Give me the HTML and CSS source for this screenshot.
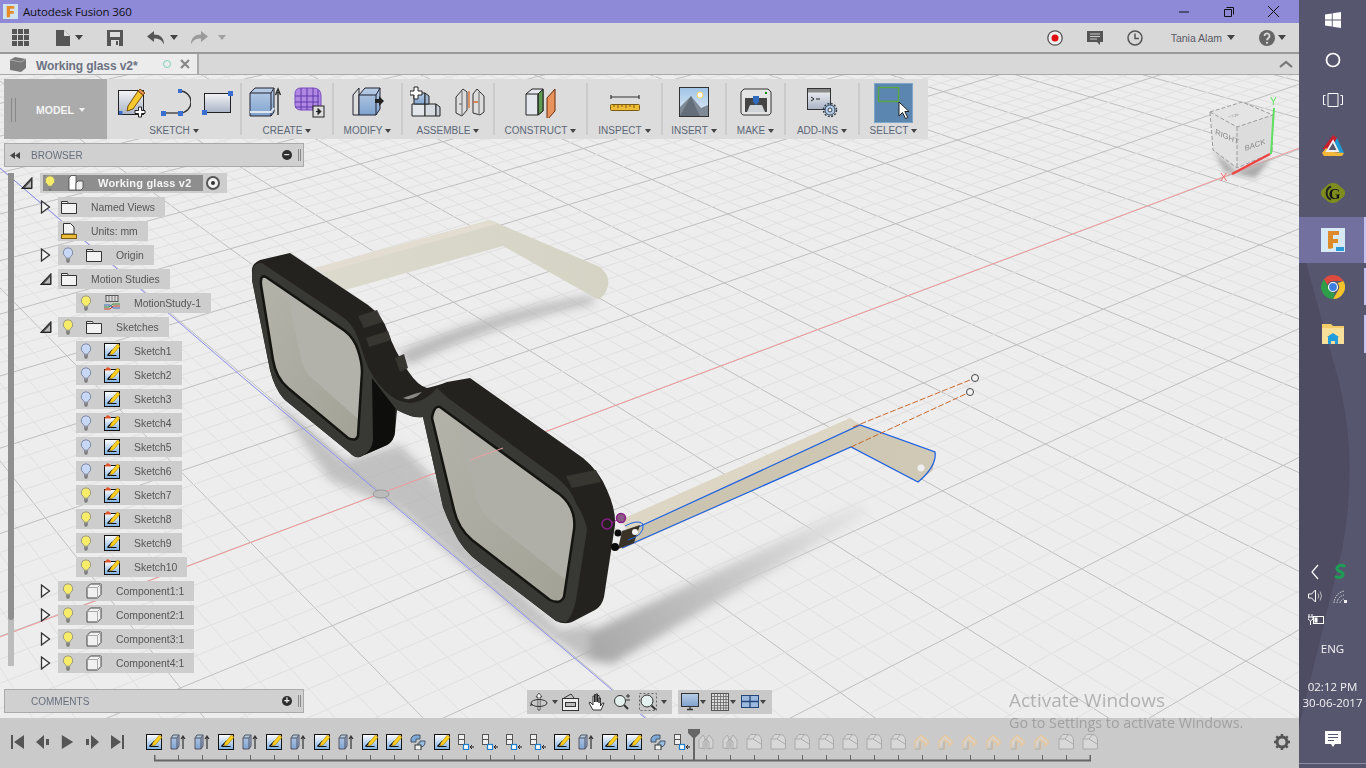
FILE: index.html
```html
<!DOCTYPE html>
<html lang="en">
<head>
<meta charset="utf-8">
<title>Autodesk Fusion 360</title>
<link rel="stylesheet" href="styles.css">
</head>
<body>
<svg class="defs" width="0" height="0" aria-hidden="true">
  <defs>
    <linearGradient id="gSk" x1="0" y1="0" x2="0" y2="1"><stop offset="0" stop-color="#fff"/><stop offset="1" stop-color="#7fb0e0"/></linearGradient>
    <linearGradient id="gPanel" x1="0" y1="0" x2="0" y2="1"><stop offset="0" stop-color="#f4f4f6"/><stop offset="1" stop-color="#a9b3c6"/></linearGradient>
    <linearGradient id="gBlue" x1="0" y1="0" x2="0" y2="1"><stop offset="0" stop-color="#b9cde6"/><stop offset="1" stop-color="#7fa3cf"/></linearGradient>
    <linearGradient id="gSky" x1="0" y1="0" x2="0" y2="1"><stop offset="0" stop-color="#9fc4e6"/><stop offset="1" stop-color="#e4eef6"/></linearGradient>
    <linearGradient id="gTemple" x1="0" y1="0" x2="1" y2="0"><stop offset="0" stop-color="#dcdacd"/><stop offset="1" stop-color="#d4d3c4"/></linearGradient>
    <linearGradient id="gNear" x1="0" y1="0" x2="1" y2="0"><stop offset="0" stop-color="#c9c2ae"/><stop offset="1" stop-color="#d0c9b6"/></linearGradient>
    <linearGradient id="gLens" x1="0" y1="0" x2="1" y2="1"><stop offset="0" stop-color="#b4b3aa"/><stop offset="1" stop-color="#a3a297"/></linearGradient>
    <linearGradient id="gFade" gradientUnits="userSpaceOnUse" x1="590" y1="650" x2="870" y2="505"><stop offset="0" stop-color="#a8a8a8"/><stop offset=".45" stop-color="#c4c4c4"/><stop offset="1" stop-color="#e6e6e6"/></linearGradient>
    <filter id="blur6" x="-30%" y="-30%" width="160%" height="160%"><feGaussianBlur stdDeviation="5"/></filter>
    <filter id="blur3" x="-30%" y="-30%" width="160%" height="160%"><feGaussianBlur stdDeviation="2.5"/></filter>

    <symbol id="bulbY" viewBox="0 0 12 16"><path d="M6 .8a4.8 4.8 0 0 0-2.6 8.8c.5.4.6 1 .6 1.6h4c0-.6.1-1.2.6-1.6A4.8 4.8 0 0 0 6 .8z" fill="#f7ec6a" stroke="#9a9a80"/><rect x="4" y="11.5" width="4" height="3" fill="#888"/><rect x="4.8" y="14.2" width="2.4" height="1.3" fill="#666"/></symbol>
    <symbol id="bulbB" viewBox="0 0 12 16"><path d="M6 .8a4.8 4.8 0 0 0-2.6 8.8c.5.4.6 1 .6 1.6h4c0-.6.1-1.2.6-1.6A4.8 4.8 0 0 0 6 .8z" fill="#c8d8f4" stroke="#7e8aa4"/><rect x="4" y="11.5" width="4" height="3" fill="#888"/><rect x="4.8" y="14.2" width="2.4" height="1.3" fill="#666"/></symbol>
    <symbol id="folder" viewBox="0 0 16 14"><path d="M.5 13.5V1.5h6l1 2h8v10z" fill="#f2f2f2" stroke="#333"/><path d="M.5 3.5h7" stroke="#333" fill="none"/></symbol>
    <symbol id="doc" viewBox="0 0 16 16"><path d="M2.5 11V.5h7l3.500 3.500v7z" fill="#f2f2f2" stroke="#333"/><rect x=".5" y="11.5" width="15" height="4" fill="#edbb3a" stroke="#7a5a10"/></symbol>
    <symbol id="comp" viewBox="0 0 16 16"><path d="M1 4.500 4.500 1H15v10.500L11.500 15H1z" fill="#f1f1f1" stroke="#444"/><path d="M1 4.500h10.500V15M11.500 4.500 15 1" fill="none" stroke="#aaa"/></symbol>
    <symbol id="rootc" viewBox="0 0 16 16"><path d="M1 3 3 .5h5V15H1z" fill="#fff" stroke="#444" stroke-width=".8"/><path d="M8 8l2-2h5v7l-2 2H8z" fill="#eee" stroke="#444" stroke-width=".8"/></symbol>
    <symbol id="motion" viewBox="0 0 16 16"><rect x="2" y=".5" width="12" height="6" fill="#ddd" stroke="#555"/><path d="M5 .5v6M8 .5v6M11 .5v6" stroke="#777"/><path d="M0 12h5l4-3h7" stroke="#3a8f3a" fill="none"/><path d="M0 14h6l3-3h7" stroke="#d04030" fill="none"/><path d="M0 10h6l3 3h7" stroke="#4070c0" fill="none"/></symbol>
    <symbol id="sk" viewBox="0 0 16 16"><rect x=".5" y=".5" width="15" height="15" fill="url(#gSk)" stroke="#111"/><path d="M3.500 12.500h9M3.500 12.500 8.500 7" stroke="#111" stroke-width="1.200" fill="none"/><path d="M6 12l1-3.500L13.500 1 16 3.200 9.500 10.700z" fill="#ffd21e" stroke="#a8730c" stroke-width=".6"/></symbol>
    <symbol id="skw" viewBox="0 0 16 16"><rect x=".5" y="2.500" width="15" height="13" fill="url(#gSk)" stroke="#111"/><path d="M3.500 12.500h9M3.500 12.500 8.500 7" stroke="#111" stroke-width="1.200" fill="none"/><path d="M6 12l1-3.500L13.500 1 16 3.200 9.500 10.700z" fill="#ffd21e" stroke="#a8730c" stroke-width=".6"/><path d="M0 3.500h7V2L3.500 0z" fill="#e0562e"/></symbol>
    <symbol id="ex" viewBox="0 0 16 16"><path d="M1 4 3 1h6v11l-2 3H1z" fill="url(#gBlue)" stroke="#556"/><path d="M1 4h6v11M7 4l2-3" fill="none" stroke="#556"/><path d="M13 15V3M11 5l2-3 2 3" fill="none" stroke="#333" stroke-width="1.200"/></symbol>
    <symbol id="cb" viewBox="0 0 16 16"><path d="M1 7a5 5 0 0 1 5-6h4v4H6v3H1z" fill="#7fa9d6" stroke="#456"/><path d="M15 9a5 5 0 0 1-5 4H8V9h2V7h5z" fill="#9cc0e4" stroke="#456"/><rect x="5" y="11" width="6" height="5" fill="#f3f3f3" stroke="#333"/></symbol>
    <symbol id="jt" viewBox="0 0 16 16"><rect x=".5" y=".5" width="6" height="5" fill="#eee" stroke="#555"/><rect x=".5" y="5.500" width="6" height="5" fill="#eee" stroke="#555"/><rect x="5.500" y="10.500" width="5" height="5" fill="#fff" stroke="#1f7fd0" stroke-width="1.200"/><path d="M16 13h-4M14 11l-2 2 2 2" fill="none" stroke="#222"/></symbol>
    <symbol id="ga" viewBox="0 0 16 16"><path d="M1 14V6l4-5 2 3v11zM15 14V6l-4-5-2 3v11z" fill="#d4d4d4" stroke="#aaa"/><path d="M5 15V8l3-3 3 3v7" fill="none" stroke="#aaa"/></symbol>
    <symbol id="gd" viewBox="0 0 16 16"><path d="M1 5 5 .5h5a5.500 5.500 0 0 1 5.500 5.500V15H1z" fill="#d8d8d8" stroke="#aaa"/><path d="M1 5h6l8 5M7 5l3-4" fill="none" stroke="#aaa"/></symbol>
    <symbol id="go" viewBox="0 0 16 16"><path d="M1 15V7l6-6 8 7-4 4V9L7 6v9z" fill="#d8d2c8" stroke="#e8c59a" stroke-width="1.200"/><path d="M1 15h5V7" fill="#ccc" stroke="#aaa"/></symbol>
    <symbol id="twO" viewBox="0 0 12 14"><path d="M.5 12.500 11 1.500v11z" fill="#444" stroke="#222"/><path d="M4 11.500 10 5v6.500z" fill="#bbb"/></symbol>
    <symbol id="twC" viewBox="0 0 12 14"><path d="M1.500 1 9.500 7l-8 6z" fill="#f4f4f4" stroke="#333" stroke-width="1.300"/></symbol>
  </defs>
</svg>

<div class="app">
  <div class="main">
    <header class="titlebar">
      <svg class="app-logo" viewBox="0 0 16 16"><rect width="16" height="16" fill="#cfe2f0"/><path d="M4 2h8v3H7.500v2.500h4v3h-4V14H4z" fill="#e88b2a"/></svg>
      <span class="app-title">Autodesk Fusion 360</span>
      <div class="win-ctrls">
        <span class="win-btn"><svg viewBox="0 0 14 14"><path d="M2 7h10" stroke="#111"/></svg></span>
        <span class="win-btn"><svg viewBox="0 0 14 14"><path d="M4.500 2.500h7v7M2.500 4.500h7v7h-7z" fill="none" stroke="#111"/></svg></span>
        <span class="win-btn"><svg viewBox="0 0 14 14"><path d="M1 1l11 11M12 1 1 12" stroke="#111" fill="none"/></svg></span>
      </div>
    </header>

    <div class="qat">
      <svg class="q-grid" viewBox="0 0 17 17"><path d="M0 0h5v5H0zM6 0h5v5H6zM12 0h5v5h-5zM0 6h5v5H0zM6 6h5v5H6zM12 6h5v5h-5zM0 12h5v5H0zM6 12h5v5H6zM12 12h5v5h-5z" fill="#555"/></svg>
      <div class="q-cluster q-file">
        <svg class="q-ico14" viewBox="0 0 14 16"><path d="M0 0h8l6 6v10H0z" fill="#555"/><path d="M8 0v6h6" fill="#ddd"/></svg><span class="caret"></span>
      </div>
      <svg class="q-save" viewBox="0 0 16 16"><path d="M0 0h16v16H0z" fill="#555"/><rect x="3" y="2" width="10" height="5" fill="#ddd"/><rect x="4" y="10" width="8" height="6" fill="#ddd"/><rect x="9" y="11" width="2" height="4" fill="#555"/></svg>
      <div class="q-cluster q-undo">
        <svg class="q-ico17" viewBox="0 0 17 14"><path d="M7 0v3.500c6 0 10 3 10 10C15 9 12 7.500 7 7.500V11L0 5.500z" fill="#555"/></svg><span class="caret"></span>
      </div>
      <div class="q-cluster q-redo">
        <svg class="q-ico17" viewBox="0 0 17 14"><path d="M10 0v3.500c-6 0-10 3-10 10C2 9 5 7.500 10 7.500V11l7-5.500z" fill="#9a9a9a"/></svg><span class="caret caret-off"></span>
      </div>
      <div class="q-right">
        <svg class="q-ico16" viewBox="0 0 16 16"><circle cx="8" cy="8" r="7.200" fill="#eee" stroke="#555" stroke-width="1.300"/><circle cx="8" cy="8" r="3.500" fill="#e01010"/></svg>
        <svg class="q-ico16" viewBox="0 0 16 16"><path d="M0 1h16v11h-3v3l-3-3H0z" fill="#555"/><path d="M3 4h10M3 6.500h10M3 9h7" stroke="#ccc"/></svg>
        <svg class="q-ico16" viewBox="0 0 16 16"><circle cx="8" cy="8" r="7" fill="none" stroke="#555" stroke-width="1.500"/><path d="M8 3.500V8.500h4" fill="none" stroke="#555" stroke-width="1.500"/></svg>
        <span class="user">Tania Alam</span><span class="caret user-caret"></span>
        <svg class="q-ico16 q-help" viewBox="0 0 16 16"><circle cx="8" cy="8" r="8" fill="#666"/><path d="M5.500 6a2.500 2.500 0 1 1 3.800 2.100C8.500 8.700 8 9 8 10.300" fill="none" stroke="#ddd" stroke-width="1.800"/><circle cx="8" cy="12.800" r="1.100" fill="#ddd"/></svg><span class="caret help-caret"></span>
      </div>
    </div>

    <div class="tabbar">
      <div class="tab">
        <svg class="tab-cube" viewBox="0 0 16 15"><path d="M0 3 5 0l11 2v9l-5 4-11-2z" fill="#777"/><path d="M0 3l11 2 5-3" fill="none" stroke="#aaa"/></svg>
        <span class="tab-name">Working glass v2*</span>
        <span class="tab-dot"></span>
        <svg class="tab-x" viewBox="0 0 10 10"><path d="M1 1l8 8M9 1 1 9" stroke="#888" stroke-width="2.200"/></svg>
      </div>
      <svg class="tab-up" viewBox="0 0 14 8"><path d="M1 7l6-5 6 5" fill="none" stroke="#777" stroke-width="2.200"/></svg>
    </div>

    <div class="viewport">
      <svg class="scene" viewBox="0 75 1299 643" width="1299" height="643">
        <g id="grid"></g>
        <g filter="url(#blur6)" fill="#b2b2b2">
          <path d="M400 352C460 325 530 305 590 296L596 303C530 315 470 335 408 365z" opacity=".9"/>
          <path d="M270 395 345 460 400 445 450 495 480 555 560 630 590 625 600 650 600 662 585 660 520 615 400 510 330 480z" opacity=".75"/>
          <path d="M590 632 860 503 868 514 612 664 590 660z" fill="url(#gFade)"/>
        </g>
        <path d="M0 168 240 375 565 650 645 718" fill="none" stroke="#8d8df0" stroke-width="1"/>
        <path d="M0 637 382 493 1163 200 1299 148" fill="none" stroke="#f59a9a" stroke-width="1"/>
        <ellipse cx="381" cy="494" rx="8" ry="4" fill="#bbb" stroke="#999"/>

        <!-- far temple -->
        <path d="M315 268 490 220 600 267Q610 275 608 286 605 298 597 299L503 246 345 290z" fill="url(#gTemple)"/>
        <path d="M315 268 490 220 497 224 325 272z" fill="#e2ddd0"/>

        <!-- glasses body -->
        <path d="M252 272Q251 264 260 260L290 253 368 305Q383 316 388 332 394 350 408 371 418 386 427 388 440 385 447 382L470 378 583 458Q600 472 607 490 616 510 615 525L604 597Q602 606 595 610L572 622Q564 625 556 621L480 563Q462 550 453 530 447 518 443 507L423 417Q414 419 397 410L395 432Q394 441 387 445L360 457Q354 458 350 453L285 400Q275 390 270 370L252 280z" fill="#23221e"/>
        <g fill="#373631">
          <path d="M358 316 377 310 383 322 364 328z"/>
          <path d="M366 338 388 331 391 340 369 347z"/>
          <path d="M566 476 596 470 601 482 572 488z"/>
          <path d="M395 358 404 354 408 368 400 372z"/>
        </g>
        <path d="M252 274Q253 262 262 263L340 315Q352 322 358 338L366 362Q372 378 385 391 396 402 410 403 425 402 437 388L448 398 556 477Q570 487 576 503 586 520 587 530L576 600Q573 615 566 622L556 621 480 563Q462 550 453 530 447 518 443 507L423 417Q414 419 397 410L376 384 374 440Q372 452 360 457 354 458 350 453L285 400Q275 390 270 370L252 280z" fill="#383834"/>
        <path d="M372 378 395 408 395 432Q394 441 387 445L364 455Q372 450 373 440z" fill="#0e0e0c"/>
        <path d="M403 398Q412 402 422 392 416 393 403 398z" fill="#8a8983"/>
        <!-- left lens -->
        <path d="M266 277Q260 274 261 285L273 360Q276 378 288 388L348 438Q356 442 358 436L362 372Q362 362 358 350 354 338 345 331z" fill="#c3c2bb" fill-opacity=".88"/>
        <path d="M266 278 289 301 302 363Q305 372 312 378L359 420 358 436Q356 442 348 438L288 388Q276 378 273 360L261 285z" fill="url(#gLens)"/>
        <path d="M266 277Q260 274 261 285L273 360Q276 378 288 388L348 438Q356 442 358 436L362 372Q362 362 358 350 354 338 345 331z" fill="none" stroke="#141411" stroke-width="2.500"/>
        <!-- right lens -->
        <path d="M440 407Q434 405 432 418L454 510Q458 528 472 540L550 600Q560 605 564 597L574 530Q576 515 568 503 563 496 555 491z" fill="#c3c2bb" fill-opacity=".86"/>
        <path d="M440 408 458 420 476 498Q480 510 490 520L567 581 564 597Q560 605 550 600L472 540Q458 528 454 510L432 418z" fill="url(#gLens)"/>
        <path d="M440 407Q434 405 432 418L454 510Q458 528 472 540L550 600Q560 605 564 597L574 530Q576 515 568 503 563 496 555 491z" fill="none" stroke="#141411" stroke-width="2.500"/>
        <path d="M470 460 503 448" stroke="#e9a0a0" fill="none"/>

        <!-- near temple -->
        <path d="M620 520 850 418 860 425 630 534z" fill="#ddd6c4"/>
        <path d="M628 533 860 425 935 452 933 470 918 482 851 447 622 549z" fill="url(#gNear)"/>
        <path d="M632 530 860 425 935 452Q937 466 918 482L851 447 622 548" fill="none" stroke="#1c5fe0" stroke-width="1.300"/>
        <path d="M853 427 975 378M851 447 970 392" stroke="#c8682a" stroke-width="1" stroke-dasharray="6 2" fill="none"/>
        <circle cx="975" cy="378" r="3.500" fill="#f3f3f3" stroke="#444"/>
        <circle cx="970" cy="392" r="3.500" fill="#f3f3f3" stroke="#444"/>
        <circle cx="921" cy="468" r="3.500" fill="#eee"/>
        <!-- hinge -->
        <path d="M622 531 640 525 634 543 618 549z" fill="#3a3226"/>
        <path d="M628 540Q645 535 643 524 638 519 625 526" fill="none" stroke="#1c5fe0"/>
        <circle cx="618" cy="533" r="3.500" fill="#0b0b0b"/>
        <circle cx="615" cy="547" r="4" fill="#0b0b0b"/>
        <circle cx="635" cy="532" r="3" fill="#f4f4f4"/>
        <circle cx="607" cy="524" r="5" fill="none" stroke="#8a1e88" stroke-width="1.500"/>
        <circle cx="621" cy="518" r="4.500" fill="#8a5a82" stroke="#8a1e88" stroke-width="1.500"/>
        <path d="M612 523 617 520" stroke="#8a1e88"/>

        <!-- view cube -->
        <g filter="url(#blur3)"><path d="M1213 150 1237 172 1272 158 1255 178 1225 172z" fill="#aaa"/></g>
        <path d="M1210 112 1242 102 1273 115 1237 127z" fill="#e4e4e4"/>
        <path d="M1210 112 1237 127 1237 168 1213 150z" fill="#e2e2e2"/>
        <path d="M1237 127 1273 115 1272 153 1237 168z" fill="#dcdcdc"/>
        <path d="M1210 112 1242 102 1273 115 1237 127zM1210 112 1213 150 1237 168 1272 153 1273 115M1237 127V168" fill="none" stroke="#999" stroke-dasharray="4 2"/>
        <text class="vc-label" transform="matrix(1 .45 -.1 1 1215 134)">RIGHT</text>
        <text class="vc-label" transform="matrix(1 -.35 .1 1 1245 151)">BACK</text>
        <text class="vc-top" transform="matrix(.8 -.25 .8 .35 1231 118)">TOP</text>
        <path d="M1271 154 1274 108" stroke="#5fe05f" stroke-width="2"/>
        <path d="M1270 154 1232 174" stroke="#ee4444" stroke-width="2.500"/>
        <text class="vc-y" x="1270" y="105">Y</text>
        <text class="vc-x" x="1220" y="181">X</text>
      </svg>

      <div class="ribbon">
        <div class="model"><span class="grip"></span><span class="model-text">MODEL</span><span class="caret caret-w"></span></div>
        <section class="rgroup">
          <div class="ricons">
            <svg class="ri" viewBox="0 0 32 32"><rect x="3.500" y="4.500" width="25" height="24" fill="url(#gPanel)" stroke="#222"/><rect x="4" y="25" width="3.500" height="3.500" fill="#3a6fd0"/><path d="M13 20 23 5l5 4-10 14-6 2z" fill="#f5c92e" stroke="#7a4d0a"/><path d="M23 5l2-2 5 4-2 2z" fill="#e88f60" stroke="#7a4d0a"/><path d="M23.500 21h3v3.500h3.500v3h-3.500V31h-3v-3.500H20v-3h3.500z" fill="#fff" stroke="#222"/></svg>
            <svg class="ri" viewBox="0 0 32 32"><path d="M4 27h19" stroke="#333" stroke-width="1.300"/><path d="M21 5A11 11 0 0 1 21 27" fill="none" stroke="#333" stroke-width="1.300"/><path d="M2 25h5v5H2zM19 25h5v5h-5zM19 3h4v4h-4z" fill="#3a6fd0"/></svg>
            <svg class="ri ri-left" viewBox="0 0 32 32"><rect x="3.500" y="7.500" width="26" height="19" fill="url(#gPanel)" stroke="#222"/><path d="M1 24h5v5H1zM27 5h5v5h-5z" fill="#3a6fd0"/></svg>
          </div>
          <div class="rlabel">SKETCH<span class="caret"></span></div>
        </section>
        <section class="rgroup">
          <div class="ricons">
            <svg class="ri" viewBox="0 0 32 32"><path d="M1 7 6 2h19v24l-3 4H1z" fill="url(#gBlue)" stroke="#223"/><path d="M1 7h21v23M22 7l3-5" fill="none" stroke="#223"/><path d="M1 26h21l3-4" fill="none" stroke="#dfe6ee" stroke-width="2"/><path d="M29 29V6M26.500 9 29 3l2.500 6" fill="none" stroke="#222" stroke-width="1.300"/></svg>
            <svg class="ri" viewBox="0 0 32 32"><path d="M2 8q0-6 6-6h12q8 0 8 8v14H8q-6 0-6-6z" fill="#b088e4" stroke="#7a4cc0"/><path d="M2 10h24M2 16h24M2 21h22M8 2v22M14 2v22M20 2v22M25 4v20" stroke="#5e3aa8" fill="none"/><rect x="20" y="20" width="11" height="11" fill="#ddd" stroke="#222"/><path d="M23 25.500h3M25 22.500l3 3-3 3z" fill="#222" stroke="#222"/></svg>
          </div>
          <div class="rlabel">CREATE<span class="caret"></span></div>
        </section>
        <section class="rgroup">
          <div class="ricons">
            <svg class="ri" viewBox="0 0 32 32"><path d="M1 9 7 2v27H1z" fill="#ddd" stroke="#223"/><path d="M7 9l6-7h15v21l-4 6H7z" fill="url(#gBlue)" stroke="#223"/><path d="M7 9h17v20M24 9l4-7" fill="none" stroke="#223"/><path d="M23 13h4v-3l5 5-5 5v-3h-4z" fill="#222"/></svg>
          </div>
          <div class="rlabel">MODIFY<span class="caret"></span></div>
        </section>
        <section class="rgroup">
          <div class="ricons">
            <svg class="ri" viewBox="0 0 32 32"><path d="M2 18h13v12H2z" fill="#e3e7ec" stroke="#222"/><path d="M15 18h11v12H15z" fill="#d6dbe2" stroke="#222"/><path d="M26 18l4 3v9h-4z" fill="#c8cfd8" stroke="#222"/><path d="M4 7h11v11H4z" fill="url(#gBlue)" stroke="#222"/><path d="M15 7l4 3v8h-4z" fill="#9fb5d2" stroke="#222"/><path d="M4 1h4v4h4v4H8v4H4V9H0V5h4z" fill="#fff" stroke="#222"/></svg>
            <svg class="ri" viewBox="0 0 32 32"><path d="M2 27V11L9 3l4 3v18l-5 6z" fill="#ddd" stroke="#333"/><path d="M8 5v25M5 18h3" stroke="#666"/><path d="M19 27V8l4-5 7 7v16l-4 3z" fill="#ddd" stroke="#333"/><path d="M25 6v23" stroke="#666"/><path d="M15 5v17M19 16h5" stroke="#d86a2a" stroke-width="1.300"/></svg>
          </div>
          <div class="rlabel">ASSEMBLE<span class="caret"></span></div>
        </section>
        <section class="rgroup">
          <div class="ricons">
            <svg class="ri" viewBox="0 0 32 32"><path d="M1 8l6-5h11v22l-5 4H1z" fill="#e4e8ee" stroke="#222"/><path d="M13 8l5-5v22l-5 4z" fill="#5f9a52" stroke="#222"/><path d="M1 8h12v21" fill="none" stroke="#222"/><path d="M22 12l8-9v22l-8 9z" fill="#e8935c" stroke="#6a2b0a"/></svg>
          </div>
          <div class="rlabel">CONSTRUCT<span class="caret"></span></div>
        </section>
        <section class="rgroup">
          <div class="ricons">
            <svg class="ri" viewBox="0 0 32 32"><path d="M2 9v4M2 11h28M30 9v4" stroke="#333" stroke-width="1.200" fill="none"/><rect x="1.500" y="18.500" width="29" height="6" rx="1" fill="#eebc36" stroke="#7a5a10"/><path d="M5 19v2M9 19v3M13 19v2M17 19v3M21 19v2M25 19v3" stroke="#7a5a10"/></svg>
          </div>
          <div class="rlabel">INSPECT<span class="caret"></span></div>
        </section>
        <section class="rgroup">
          <div class="ricons">
            <svg class="ri" viewBox="0 0 32 32"><rect x="1.500" y="1.500" width="29" height="29" fill="url(#gSky)" stroke="#333"/><circle cx="22" cy="9" r="3" fill="#fff" stroke="#f6d860"/><path d="M2 30V21L13 10l10 12 7-3v11z" fill="#7f8a97"/><path d="M2 30 13 10l5 12 4 8z" fill="#646e7a"/></svg>
          </div>
          <div class="rlabel">INSERT<span class="caret"></span></div>
        </section>
        <section class="rgroup">
          <div class="ricons">
            <svg class="ri" viewBox="0 0 32 32"><path d="M1 6l3-3h24l3 3v21l-2 2H3l-2-2z" fill="#e4e4e4" stroke="#333"/><rect x="5" y="12" width="22" height="14" fill="#444"/><path d="M7 26l3-7h12l3 7z" fill="#cfd3d8"/><path d="M13 10h6v6l-3 3-3-3z" fill="#2f6cc0"/><rect x="25" y="6" width="2" height="2" fill="#0a8a0a"/></svg>
          </div>
          <div class="rlabel">MAKE<span class="caret"></span></div>
        </section>
        <section class="rgroup">
          <div class="ricons">
            <svg class="ri" viewBox="0 0 32 32"><rect x="1.500" y="2.500" width="23" height="21" fill="url(#gPanel)" stroke="#333"/><rect x="2" y="3" width="22" height="3.500" fill="#888"/><path d="M5 11l3 2-3 2M10 13h4" fill="none" stroke="#222"/><circle cx="24" cy="24" r="5" fill="#b7cdec" stroke="#345"/><circle cx="24" cy="24" r="6.500" fill="none" stroke="#345" stroke-width="1.500" stroke-dasharray="2 1.400"/><circle cx="24" cy="24" r="2" fill="#eee" stroke="#345"/></svg>
          </div>
          <div class="rlabel">ADD-INS<span class="caret"></span></div>
        </section>
        <section class="rgroup rgroup-sel">
          <div class="ricons">
            <svg class="select-btn" viewBox="0 0 39 40"><rect width="39" height="40" fill="#5a86b0"/><rect x=".5" y=".5" width="38" height="39" fill="none" stroke="#7ea4c8"/><rect x="4.500" y="4.500" width="20" height="14" fill="none" stroke="#5aa83a" stroke-width="1.300"/><path d="M25 19v14l3.500-3.500 3 6 2.300-1-3-6H35z" fill="#fff" stroke="#222"/></svg>
          </div>
          <div class="rlabel">SELECT<span class="caret"></span></div>
        </section>
      </div>

      <aside class="browser">
        <div class="panel-head">
          <svg class="ph-back" viewBox="0 0 10 7"><path d="M5 0v7L0 3.500zM10 0v7L5 3.500z" fill="#444"/></svg>
          <span class="ph-title">BROWSER</span>
          <span class="ph-btn">−</span><span class="ph-grip"></span>
        </div>
        <div class="tree-wrap">
          <div class="scroll-track"><div class="scroll-thumb"></div></div>
          <ul class="tree">
            <li class="row lvl0"><svg class="twist"><use href="#twO"/></svg>
              <div class="pill root">
                <div class="root-sel"><svg class="bulb"><use href="#bulbY"/></svg><svg class="ico"><use href="#rootc"/></svg><span class="label root-label">Working glass v2</span></div>
                <span class="radio"></span>
              </div></li>
            <li class="row lvl1"><svg class="twist"><use href="#twC"/></svg><div class="pill nobulb"><svg class="ico"><use href="#folder"/></svg><span class="label">Named Views</span></div></li>
            <li class="row lvl1"><span class="twist"></span><div class="pill nobulb"><svg class="ico"><use href="#doc"/></svg><span class="label">Units: mm</span></div></li>
            <li class="row lvl1"><svg class="twist"><use href="#twC"/></svg><div class="pill"><svg class="bulb"><use href="#bulbB"/></svg><svg class="ico"><use href="#folder"/></svg><span class="label">Origin</span></div></li>
            <li class="row lvl1"><svg class="twist"><use href="#twO"/></svg><div class="pill nobulb"><svg class="ico"><use href="#folder"/></svg><span class="label">Motion Studies</span></div></li>
            <li class="row lvl2"><span class="twist"></span><div class="pill"><svg class="bulb"><use href="#bulbY"/></svg><svg class="ico"><use href="#motion"/></svg><span class="label">MotionStudy-1</span></div></li>
            <li class="row lvl1"><svg class="twist"><use href="#twO"/></svg><div class="pill"><svg class="bulb"><use href="#bulbY"/></svg><svg class="ico"><use href="#folder"/></svg><span class="label">Sketches</span></div></li>
            <li class="row lvl2"><span class="twist"></span><div class="pill"><svg class="bulb"><use href="#bulbB"/></svg><svg class="ico"><use href="#sk"/></svg><span class="label">Sketch1</span></div></li>
            <li class="row lvl2"><span class="twist"></span><div class="pill"><svg class="bulb"><use href="#bulbB"/></svg><svg class="ico"><use href="#skw"/></svg><span class="label">Sketch2</span></div></li>
            <li class="row lvl2"><span class="twist"></span><div class="pill"><svg class="bulb"><use href="#bulbB"/></svg><svg class="ico"><use href="#sk"/></svg><span class="label">Sketch3</span></div></li>
            <li class="row lvl2"><span class="twist"></span><div class="pill"><svg class="bulb"><use href="#bulbB"/></svg><svg class="ico"><use href="#skw"/></svg><span class="label">Sketch4</span></div></li>
            <li class="row lvl2"><span class="twist"></span><div class="pill"><svg class="bulb"><use href="#bulbB"/></svg><svg class="ico"><use href="#sk"/></svg><span class="label">Sketch5</span></div></li>
            <li class="row lvl2"><span class="twist"></span><div class="pill"><svg class="bulb"><use href="#bulbB"/></svg><svg class="ico"><use href="#skw"/></svg><span class="label">Sketch6</span></div></li>
            <li class="row lvl2"><span class="twist"></span><div class="pill"><svg class="bulb"><use href="#bulbY"/></svg><svg class="ico"><use href="#skw"/></svg><span class="label">Sketch7</span></div></li>
            <li class="row lvl2"><span class="twist"></span><div class="pill"><svg class="bulb"><use href="#bulbY"/></svg><svg class="ico"><use href="#skw"/></svg><span class="label">Sketch8</span></div></li>
            <li class="row lvl2"><span class="twist"></span><div class="pill"><svg class="bulb"><use href="#bulbY"/></svg><svg class="ico"><use href="#sk"/></svg><span class="label">Sketch9</span></div></li>
            <li class="row lvl2"><span class="twist"></span><div class="pill"><svg class="bulb"><use href="#bulbY"/></svg><svg class="ico"><use href="#skw"/></svg><span class="label">Sketch10</span></div></li>
            <li class="row lvl1"><svg class="twist"><use href="#twC"/></svg><div class="pill"><svg class="bulb"><use href="#bulbY"/></svg><svg class="ico"><use href="#comp"/></svg><span class="label">Component1:1</span></div></li>
            <li class="row lvl1"><svg class="twist"><use href="#twC"/></svg><div class="pill"><svg class="bulb"><use href="#bulbY"/></svg><svg class="ico"><use href="#comp"/></svg><span class="label">Component2:1</span></div></li>
            <li class="row lvl1"><svg class="twist"><use href="#twC"/></svg><div class="pill"><svg class="bulb"><use href="#bulbY"/></svg><svg class="ico"><use href="#comp"/></svg><span class="label">Component3:1</span></div></li>
            <li class="row lvl1"><svg class="twist"><use href="#twC"/></svg><div class="pill"><svg class="bulb"><use href="#bulbY"/></svg><svg class="ico"><use href="#comp"/></svg><span class="label">Component4:1</span></div></li>
          </ul>
        </div>
        <div class="panel-head">
          <span class="ph-back"></span>
          <span class="ph-title">COMMENTS</span>
          <span class="ph-btn">+</span><span class="ph-grip"></span>
        </div>
      </aside>

      <div class="navbar">
        <div class="navgroup nav-a">
          <svg class="nav-ico" viewBox="0 0 18 18"><path d="M9 0 6 4h2v13h2V4h2z" fill="#fff" stroke="#333" stroke-width=".8"/><ellipse cx="9" cy="10" rx="8" ry="3.500" fill="none" stroke="#333"/><path d="M1 10l-1 3 3-1z" fill="#333"/></svg><span class="caret"></span>
          <svg class="nav-ico" viewBox="0 0 18 18"><rect x=".5" y="5.500" width="16" height="12" fill="#eee" stroke="#333"/><rect x="3.500" y="9.500" width="10" height="4" fill="#bbb" stroke="#333"/><path d="M2 5 9 1l3 4" fill="none" stroke="#333"/></svg>
          <svg class="nav-ico" viewBox="0 0 18 18"><path d="M5 17 1 10l1-1 3 3V3h1.500v6V1.500H8V9V1h1.500v8V2.500H11V10V5h1.500v8l2-3h1.500l-3 7z" fill="#fff" stroke="#222" stroke-width=".9"/></svg>
          <svg class="nav-ico" viewBox="0 0 18 18"><circle cx="7" cy="8" r="5.500" fill="#e4f0ee" stroke="#333"/><path d="M11 12l4 4" stroke="#333" stroke-width="2"/><path d="M13 3h4M15 1v4M13 7h4" stroke="#333"/></svg>
          <svg class="nav-ico" viewBox="0 0 18 18"><rect x=".5" y=".5" width="17" height="17" fill="none" stroke="#666" stroke-dasharray="2 2"/><circle cx="8" cy="8" r="6" fill="#e4f0ee" stroke="#333"/><path d="M12.500 12.500l4 4" stroke="#333" stroke-width="2"/></svg><span class="caret"></span>
        </div>
        <div class="navgroup nav-b">
          <svg class="nav-ico" viewBox="0 0 18 18"><rect x=".5" y=".5" width="17" height="13" fill="url(#gBlue)" stroke="#333"/><path d="M6 16.500h6M9 14v2" stroke="#333" stroke-width="1.300"/></svg><span class="caret"></span>
          <svg class="nav-ico" viewBox="0 0 18 18"><rect x=".5" y=".5" width="17" height="17" fill="#ddd" stroke="#555"/><path d="M3.500 1v16M6.500 1v16M9.500 1v16M12.500 1v16M15 1v16M1 3.500h16M1 6.500h16M1 9.500h16M1 12.500h16M1 15h16" stroke="#666" stroke-width=".8"/></svg><span class="caret"></span>
          <svg class="nav-ico" viewBox="0 0 18 18"><rect x=".5" y="2.500" width="17" height="12" fill="#9db9de" stroke="#24457a"/><path d="M9 2.500v12M1 8.500h16" stroke="#24457a" stroke-width="1.300"/></svg><span class="caret"></span>
        </div>
      </div>
    </div>

    <footer class="timeline">
      <div class="tl-ctrls">
        <svg class="tl-btn" viewBox="0 0 13 14"><path d="M0 0h2v14H0zM13 0v14L3 7z" fill="#555"/></svg>
        <svg class="tl-btn" viewBox="0 0 13 14"><path d="M8 0v14L0 7zM10 4h3v6h-3z" fill="#555"/></svg>
        <svg class="tl-btn" viewBox="0 0 13 16"><path d="M0 0l13 8-13 8z" fill="#555"/></svg>
        <svg class="tl-btn" viewBox="0 0 13 14"><path d="M5 0v14l8-7zM0 4h3v6H0z" fill="#555"/></svg>
        <svg class="tl-btn" viewBox="0 0 13 14"><path d="M0 0v14l10-7zM11 0h2v14h-2z" fill="#555"/></svg>
      </div>
      <div class="tl-track">
        <svg class="tl-ico"><use href="#sk"/></svg><svg class="tl-ico"><use href="#ex"/></svg><svg class="tl-ico"><use href="#ex"/></svg><svg class="tl-ico"><use href="#sk"/></svg><svg class="tl-ico"><use href="#ex"/></svg><svg class="tl-ico"><use href="#sk"/></svg><svg class="tl-ico"><use href="#ex"/></svg><svg class="tl-ico"><use href="#sk"/></svg><svg class="tl-ico"><use href="#ex"/></svg><svg class="tl-ico"><use href="#sk"/></svg><svg class="tl-ico"><use href="#sk"/></svg><svg class="tl-ico"><use href="#cb"/></svg><svg class="tl-ico"><use href="#sk"/></svg><svg class="tl-ico"><use href="#jt"/></svg><svg class="tl-ico"><use href="#jt"/></svg><svg class="tl-ico"><use href="#jt"/></svg><svg class="tl-ico"><use href="#jt"/></svg><svg class="tl-ico"><use href="#sk"/></svg><svg class="tl-ico"><use href="#ex"/></svg><svg class="tl-ico"><use href="#sk"/></svg><svg class="tl-ico"><use href="#sk"/></svg><svg class="tl-ico"><use href="#cb"/></svg><svg class="tl-ico"><use href="#jt"/></svg><svg class="tl-ico"><use href="#ga"/></svg><svg class="tl-ico"><use href="#ga"/></svg><svg class="tl-ico"><use href="#gd"/></svg><svg class="tl-ico"><use href="#gd"/></svg><svg class="tl-ico"><use href="#gd"/></svg><svg class="tl-ico"><use href="#gd"/></svg><svg class="tl-ico"><use href="#gd"/></svg><svg class="tl-ico"><use href="#gd"/></svg><svg class="tl-ico"><use href="#gd"/></svg><svg class="tl-ico"><use href="#go"/></svg><svg class="tl-ico"><use href="#go"/></svg><svg class="tl-ico"><use href="#go"/></svg><svg class="tl-ico"><use href="#go"/></svg><svg class="tl-ico"><use href="#go"/></svg><svg class="tl-ico"><use href="#go"/></svg><svg class="tl-ico"><use href="#gd"/></svg><svg class="tl-ico"><use href="#gd"/></svg>
        <svg class="tl-ruler" viewBox="0 0 937 7"><path d="M.5 0v6M936.500 0v6M0 5.500h937" fill="none" stroke="#666" stroke-width="2"/><path id="tlTicks" d="" fill="none" stroke="#666"/></svg>
        <svg class="tl-marker" viewBox="0 0 12 32"><path d="M0 0h12v4L7 9v23H5V9L0 4z" fill="#666"/></svg>
      </div>
      <svg class="tl-gear" viewBox="0 0 16 16"><circle cx="8" cy="8" r="5" fill="none" stroke="#555" stroke-width="3"/><path d="M8 0v3M8 13v3M0 8h3M13 8h3M2.300 2.300l2.100 2.100M11.600 11.600l2.100 2.100M13.700 2.300l-2.100 2.100M4.400 11.600l-2.100 2.100" stroke="#555" stroke-width="2.600"/></svg>
    </footer>

    <div class="watermark">
      <div class="wm-1">Activate Windows</div>
      <div class="wm-2">Go to Settings to activate Windows.</div>
    </div>
  </div>

  <aside class="taskbar">
    <svg class="tb-wedge" viewBox="0 0 67 768"><path d="M0 237 34 360Q62 450 43 550L0 727z" fill="#4e4c62"/></svg>
    <div class="tb-top">
      <div class="tb-sys"><svg class="tb-ico" viewBox="0 0 16 16"><path d="M0 2.500 6.800 1.500v6H0zM7.700 1.300 16 0v7.500H7.700zM0 8.400h6.800v6.100L0 13.500zM7.700 8.400H16V16l-8.300-1.300z" fill="#fff"/></svg></div>
      <div class="tb-sys"><svg class="tb-ico" viewBox="0 0 16 16"><circle cx="8" cy="8" r="6.500" fill="none" stroke="#fff" stroke-width="1.700"/></svg></div>
      <div class="tb-sys"><svg class="tb-ico tb-wide" viewBox="0 0 20 14"><path d="M5 .5h10v13H5z" fill="none" stroke="#fff"/><path d="M2.500 2.500H.5v9h2M17.500 2.500h2v9h-2" fill="none" stroke="#fff"/></svg></div>
      <div class="tb-apps">
        <div class="tb-app"><svg class="tb-app-ico" viewBox="0 0 24 24"><path d="M12 1l4 3-7 11H1.500z" fill="#c8202e"/><path d="M16 4l7 15-5 1-5-10z" fill="#1c9ad6"/><path d="M1 19l4-5 7 4 11 1-2 3H3z" fill="#f5b73a"/><path d="M12 7l5 10H6z" fill="#57566f" stroke="#f0f0f0" stroke-width="1.800"/></svg></div>
        <div class="tb-app"><svg class="tb-app-ico tb-g-ico" viewBox="0 0 24 20"><path d="M12 0c5 0 6 3 9 5 4 2 4 8 0 10-3 2-4 5-9 5s-6-3-9-5c-4-2-4-8 0-10 3-2 4-5 9-5z" fill="#7e8d1e"/><path d="M10 3.500a7 7 0 0 0 0 13" fill="none" stroke="#222" stroke-width="2"/><text class="tb-g" x="13.500" y="16">G</text></svg></div>
        <div class="tb-app tb-active"><svg class="tb-app-ico" viewBox="0 0 24 24"><rect width="24" height="24" fill="#d6e9f4"/><path d="M7 3h11v4h-6v4h5v4h-5v5l-4 1-1-1z" fill="#dd8a2b"/><rect x="15" y="19" width="8" height="4" fill="#2a9ad6"/></svg></div>
        <div class="tb-app tb-running tb-chrome"><svg class="tb-app-ico" viewBox="0 0 24 24"><path d="M12 0a12 12 0 0 1 10.400 6H12a6 6 0 0 0-5.700 4L2.900 4.300A12 12 0 0 1 12 0z" fill="#dd4b3e"/><path d="M22.400 6A12 12 0 0 1 12 24l5.200-8.800A6 6 0 0 0 16.500 8z" fill="#f6c32c"/><path d="M12 24A12 12 0 0 1 2.900 4.300L8 12.900A6 6 0 0 0 14 17.700z" fill="#2f9e48"/><circle cx="12" cy="12" r="4.500" fill="#3d7fe0" stroke="#fff" stroke-width="1.200"/></svg></div>
        <div class="tb-app tb-running tb-explorer"><svg class="tb-app-ico" viewBox="0 0 24 22"><path d="M1 1h9l2 2h11v18H1z" fill="#f3cd6a"/><path d="M1 5h22v16H1z" fill="#f8e09a"/><path d="M7 14h10v7h-3v-3h-4v3H7z" fill="#1f9ddf"/><path d="M6 14l6-4 6 4z" fill="#1f9ddf"/></svg></div>
      </div>
    </div>
    <div class="tb-bottom">
      <div class="tray"><svg class="tray-ico" viewBox="0 0 16 16"><path d="M10 1 4 8l6 7" fill="none" stroke="#fff" stroke-width="1.200"/></svg><svg class="tray-ico" viewBox="0 0 16 16"><path d="M12 3C10 0 5 1 4 4c-1 4 7 3 6 7-1 3-6 3-8 1" fill="none" stroke="#1f9c55" stroke-width="3"/></svg></div>
      <div class="tray"><svg class="tray-ico" viewBox="0 0 16 16"><path d="M.5 6h3l4-4v12l-4-4h-3z" fill="none" stroke="#fff"/><path d="M10 5.500q1.500 2.500 0 5M12 3.500q3 4.500 0 9" fill="none" stroke="#bbb"/></svg><svg class="tray-ico" viewBox="0 0 16 16"><path d="M1 15A13 13 0 0 1 11 3M4 15A9 9 0 0 1 11 7M7 15A5 5 0 0 1 11 11" fill="none" stroke="#ddd" stroke-dasharray="1.500 1"/><rect x="11" y="12" width="3" height="3" fill="#eee"/></svg></div>
      <div class="tray"><svg class="tray-ico" viewBox="0 0 16 16"><rect x="5.500" y="4.500" width="10" height="7" fill="none" stroke="#fff"/><rect x="6.500" y="5.500" width="3" height="5" fill="#fff"/><path d="M1 2v3M4 2v3M0 5h5v2L2.500 9 0 7zM2.500 9v4" stroke="#fff" fill="none"/></svg></div>
      <div class="tb-lang">ENG</div>
      <div class="tb-clock"><div>02:12 PM</div><div>30-06-2017</div></div>
      <div class="tb-notif"><svg class="tb-ico" viewBox="0 0 16 16"><path d="M0 0h16v13H10l-2 3-2-3H0z" fill="#fff"/><path d="M3 3.500h10M3 6.500h10M3 9.500h6" stroke="#57566f"/></svg></div>
    </div>
  </aside>
</div>
<script src="grid.js"></script>
</body>
</html>
```
FILE: styles.css
```css
* { box-sizing: border-box; }
html, body { margin: 0; padding: 0; height: 100%; overflow: hidden; }
body { font-family: "Liberation Sans", Arial, sans-serif; font-size: 10px; color: #555; }
.defs { position: absolute; }
.app { display: flex; width: 1366px; height: 768px; }
.main { position: relative; width: 1299px; display: flex; flex-direction: column; background: #ededed; }

.caret { display: inline-block; width: 0; height: 0; border-left: 4px solid transparent; border-right: 4px solid transparent; border-top: 5px solid #444; }
.caret-off { border-top-color: #a0a0a0; }
.caret-w { border-top-color: #f0f0f0; border-left-width: 3.500px; border-right-width: 3.500px; border-top-width: 4px; }

/* title bar */
.titlebar { height: 23px; background: #8e8ad8; display: flex; align-items: center; flex: none; }
.app-logo { width: 15px; height: 15px; margin-left: 3px; }
.app-title { margin-left: 5px; font: 11.500px "Open Sans", sans-serif; color: #111; letter-spacing: -.15px; }
.win-ctrls { margin-left: auto; margin-right: 3px; display: flex; }
.win-btn { width: 45px; height: 23px; display: flex; align-items: center; justify-content: center; }
.win-btn svg { width: 14px; height: 14px; }

/* quick access */
.qat { height: 29px; flex: none; background: #d8d8d8; display: flex; align-items: center; padding-left: 12px; }
.q-grid { width: 17px; height: 17px; }
.q-cluster { display: flex; align-items: center; }
.q-file { margin-left: 27px; gap: 5px; }
.q-undo { margin-left: 24px; gap: 6px; }
.q-redo { margin-left: 13px; gap: 10px; }
.q-save { width: 16px; height: 16px; margin-left: 24px; }
.q-ico14 { width: 14px; height: 16px; }
.q-ico17 { width: 17px; height: 14px; }
.q-ico16 { width: 16px; height: 16px; }
.q-right { margin-left: auto; margin-right: 13px; display: flex; align-items: center; gap: 24px; }
.user { margin-left: 4px; color: #5a5a66; font-size: 10.500px; }
.user-caret { margin-left: -19px; }
.q-help { margin-left: 0; }
.help-caret { margin-left: -21px; }

/* tabs */
.tabbar { height: 23px; flex: none; background: #d8d8d8; border-top: 2px solid #999; border-bottom: 1px solid #aaa; display: flex; align-items: stretch; }
.tab { width: 199px; background: #ececec; border-right: 2px solid #aaa; display: flex; align-items: center; padding-left: 10px; }
.tab-cube { width: 16px; height: 15px; margin-top: 1px; }
.tab-name { margin-left: 10px; padding-top: 3px; font-size: 12px; font-weight: bold; color: #6b7282; letter-spacing: -.1px; }
.tab-dot { width: 8px; height: 8px; margin-left: 26px; border: 1.500px solid #7fd4c0; border-radius: 50%; }
.tab-x { width: 10px; height: 10px; margin-left: 9px; }
.tab-up { width: 14px; height: 8px; margin-left: auto; margin-right: 6px; align-self: center; }

/* viewport */
.viewport { position: relative; height: 643px; flex: none; overflow: hidden; background: #ededed; }
.scene { position: absolute; left: 0; top: 0; display: block; }
.vc-label { font: 7.500px "Liberation Sans", sans-serif; fill: #8a8a8a; }
.vc-top { font: 6px "Liberation Sans", sans-serif; fill: #999; }
.vc-y { font: 10px "Liberation Sans", sans-serif; fill: #5fe05f; }
.vc-x { font: 11px "Liberation Sans", sans-serif; fill: #f07878; }

/* ribbon */
.ribbon { position: absolute; left: 4px; top: 4px; height: 60px; display: grid; grid-template-columns: 103px 134px 92px 69px 92px 93px 75px 64px 59px 74px 69px; background: #dcdcdc; }
.model { background: #ababab; display: flex; align-items: center; padding-top: 1px; color: #f4f4f4; font-weight: bold; font-size: 10.500px; padding-left: 7px; }
.grip { width: 5px; height: 24px; border-left: 1px solid #888; border-right: 1px solid #888; }
.model-text { margin-left: 20px; }
.model .caret { margin-left: 5px; }
.rgroup { display: flex; flex-direction: column; align-items: center; position: relative; padding-top: 7px; }
.rgroup::after { content: ""; position: absolute; right: -1px; top: 4px; bottom: 4px; width: 2px; background: #cbcbcb; }
.rgroup:last-child::after { display: none; }
.rgroup-sel { padding-top: 4px; }
.ricons { display: flex; gap: 12px; height: 32px; }
.ri { width: 32px; height: 32px; }
.ri-left { margin-left: -2px; }
.select-btn { width: 39px; height: 40px; }
.rlabel { margin-top: auto; height: 16px; padding-bottom: 1px; line-height: 13px; color: #5b6676; display: flex; align-items: center; gap: 3px; }
.rlabel .caret { border-left-width: 3px; border-right-width: 3px; border-top-width: 4px; }

/* browser */
.browser { position: absolute; left: 4px; top: 68px; width: 300px; height: 570px; display: flex; flex-direction: column; justify-content: space-between; }
.panel-head { height: 24px; flex: none; background: #d0d0d0; border: 1px solid #aaa; display: flex; align-items: center; padding-left: 5px; color: #666f7c; }
.ph-back { width: 10px; height: 7px; }
.ph-title { margin-left: 11px; }
.ph-btn { margin-left: auto; width: 10px; height: 10px; line-height: 9px; border-radius: 50%; background: #2e2e2e; color: #eee; text-align: center; font-size: 10px; font-weight: bold; }
.ph-grip { width: 3px; height: 12px; margin: 0 2px 0 6px; border-left: 1px solid #888; border-right: 1px solid #888; }
.tree-wrap { position: relative; flex: 1; padding-top: 6px; }
.scroll-track { position: absolute; left: 4px; top: 6px; width: 6px; height: 493px; background: #bcbcbc; }
.scroll-thumb { height: 447px; background: #8f8f8f; border-radius: 0 0 3px 3px; }
.tree { list-style: none; margin: 0; padding: 0; display: flex; flex-direction: column; gap: 4px; }
.row { display: flex; align-items: center; height: 20px; }
.lvl0 { padding-left: 17px; }
.lvl1 { padding-left: 36px; }
.lvl2 { padding-left: 54px; }
.twist { display: block; width: 12px; height: 14px; margin-right: 6px; flex: none; }
.lvl0 .twist { margin-right: 7px; }
.pill { display: flex; align-items: center; height: 20px; background: #cdcdcd; padding-right: 10px; }
.bulb { display: block; width: 12px; height: 16px; margin-left: 4px; margin-right: 4px; flex: none; }
.ico { display: block; width: 16px; height: 16px; margin-left: 8px; flex: none; }
.nobulb .ico { margin-left: 3px; }
.label { margin-left: 14px; padding-top: 1px; white-space: nowrap; line-height: 16px; font-size: 10.400px; color: #555; }
.root { padding-right: 7px; }
.root-sel { display: flex; align-items: center; height: 16px; background: #8e8e8e; margin-left: 3px; padding-right: 12px; }
.root-sel .bulb { margin-left: 1px; }
.root-label { color: #f4f4f4; font-size: 11px; font-weight: bold; letter-spacing: .2px; padding-top: 0; }
.radio { width: 14px; height: 14px; margin-left: 3px; border-radius: 50%; background: #f2f2f2; border: 2px solid #555; position: relative; }
.radio::after { content: ""; position: absolute; left: 3px; top: 3px; width: 4px; height: 4px; border-radius: 50%; background: #333; }

/* nav bar */
.navbar { position: absolute; left: 527px; top: 615px; display: flex; gap: 6px; }
.navgroup { height: 24px; background: #c9c9c9; display: flex; align-items: center; }
.nav-a { width: 145px; padding-left: 3px; }
.nav-b { width: 94px; padding-left: 3px; }
.nav-ico { width: 18px; height: 18px; flex: none; }
.nav-a .caret { margin: 0 4px; border-left-width: 3.500px; border-right-width: 3.500px; border-top-width: 4px; }
.nav-b .caret { margin: 0 5px 0 1px; border-left-width: 3.500px; border-right-width: 3.500px; border-top-width: 4px; }
.nav-a .nav-ico + .nav-ico { margin-left: 7.500px; }

/* timeline */
.timeline { height: 50px; flex: none; background: #cacaca; display: flex; align-items: flex-start; position: relative; }
.tl-ctrls { width: 146px; padding: 17px 0 0 11px; display: flex; gap: 12px; }
.tl-btn { width: 13px; height: 14px; flex: none; }
.tl-track { position: relative; display: flex; gap: 8px; padding-top: 16px; }
.tl-ico { display: block; width: 16px; height: 16px; flex: none; }
.tl-ruler { position: absolute; left: 8px; top: 37px; width: 937px; height: 7px; }
.tl-marker { position: absolute; left: 542px; top: 11px; width: 12px; height: 32px; }
.tl-gear { position: absolute; left: 1274px; top: 16px; width: 16px; height: 16px; }

/* watermark */
.watermark { position: absolute; left: 1009px; top: 688px; pointer-events: none; font-family: "Open Sans", sans-serif; color: rgba(120,120,120,.5); }
.wm-1 { font-size: 19px; line-height: 24px; }
.wm-2 { font-size: 14.300px; line-height: 21px; }

/* taskbar */
.taskbar { position: relative; width: 67px; height: 768px; background: #57566f; display: flex; flex-direction: column; justify-content: space-between; color: #f2f2f2; font-family: "Open Sans", sans-serif; }
.tb-wedge { position: absolute; left: 0; top: 0; width: 67px; height: 768px; }
.tb-top, .tb-bottom { position: relative; }
.tb-sys { height: 40px; display: flex; align-items: center; justify-content: center; }
.tb-ico { width: 16px; height: 16px; }
.tb-wide { width: 20px; height: 14px; }
.tb-apps { margin-top: 3px; display: flex; flex-direction: column; gap: 1px; }
.tb-app { height: 46px; display: flex; align-items: center; justify-content: center; position: relative; }
.tb-app-ico { width: 24px; height: 24px; }
.tb-g-ico { height: 20px; }
.tb-g { font: bold 15px "Liberation Serif", serif; fill: #111; text-anchor: middle; }
.tb-active { background: #72709f; }
.tb-active::after, .tb-running::after { content: ""; position: absolute; right: 0; top: 0; bottom: 0; width: 2px; background: #c6c2f2; }
.tb-chrome::after { top: 4px; bottom: 5px; }
.tb-explorer::after { top: 4px; bottom: 4px; }
.tb-bottom { padding-bottom: 4px; }
.tray { height: 24px; display: flex; align-items: center; gap: 9px; padding-left: 9px; }
.tray-ico { width: 16px; height: 16px; }
.tb-lang { height: 34px; line-height: 34px; text-align: center; font-size: 11.500px; }
.tb-clock { margin-top: 13px; text-align: center; font-size: 11.500px; line-height: 16px; white-space: nowrap; }
.tb-notif { margin-top: 4px; height: 49px; border-bottom: 1px solid #8d8ca6; display: flex; align-items: center; justify-content: center; }
```
FILE: grid.js
```js
// Perspective ground grid drawn from two vanishing points and the origin.
(function () {
  var O = [382, 493], VA = [3540, -691], VB = [-716, -440];
  var a = 0.04, b = 0.075, minorStep = 0.2;
  var NS = "http://www.w3.org/2000/svg";
  var host = document.getElementById("grid");

  function project(u, v) {
    var w = 1 + a * u + b * v;
    return [
      (O[0] + a * u * VA[0] + b * v * VB[0]) / w,
      (O[1] + a * u * VA[1] + b * v * VB[1]) / w
    ];
  }

  function addLine(p, q, major) {
    var l = document.createElementNS(NS, "line");
    l.setAttribute("x1", p[0].toFixed(1));
    l.setAttribute("y1", p[1].toFixed(1));
    l.setAttribute("x2", q[0].toFixed(1));
    l.setAttribute("y2", q[1].toFixed(1));
    l.setAttribute("stroke", major ? "#bfbfbf" : "#e0e0e0");
    l.setAttribute("stroke-width", "1");
    host.appendChild(l);
  }

  function family(minI, maxI, draw) {
    [false, true].forEach(function (major) {
      for (var i = minI; i <= maxI; i++) {
        if ((i % 5 === 0) === major) draw(i * minorStep, major);
      }
    });
  }

  family(-60, 220, function (u, major) {
    var vStart = (0.05 - 1 - a * u) / b;
    addLine(project(u, vStart), project(u, 70), major);
  });
  family(-60, 220, function (v, major) {
    var uStart = (0.05 - 1 - b * v) / a;
    addLine(project(uStart, v), project(70, v), major);
  });

  // ruler ticks under the timeline, one per feature
  var ticks = "";
  for (var t = 1; t < 39; t++) ticks += "M" + (t * 24 + 0.5) + " 0v5";
  document.getElementById("tlTicks").setAttribute("d", ticks);
})();
```
